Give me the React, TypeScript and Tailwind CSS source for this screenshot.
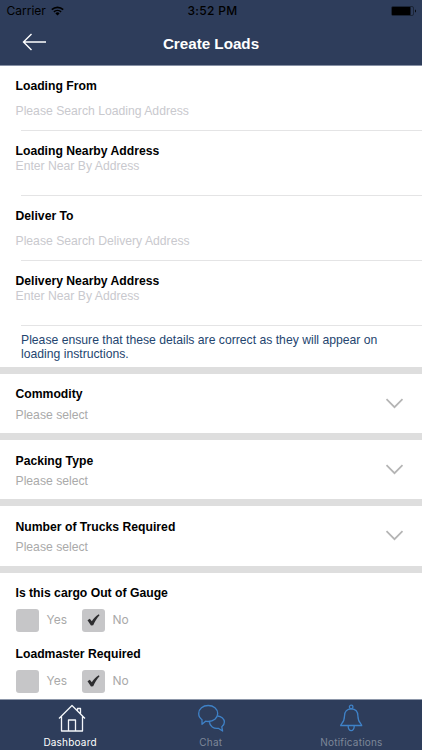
import React from "react";

const sans = "font-['Liberation_Sans',Arial,sans-serif]";
const system = "font-[Inter,Roboto,sans-serif]";

function StatusBar() {
  return (
    <div className={`grid h-[22px] grid-cols-3 items-center px-[7px] text-[12px] text-black ${system}`}>
      <div className="-ml-[0.5px] flex items-center gap-[5px]">
        <span className="text-[12px]">Carrier</span>
        <svg width="13" height="10" viewBox="0 0 13 10" fill="none" stroke="currentColor" strokeWidth="1.6">
          <path d="M0.8 3.7a8.2 8.2 0 0 1 11.4 0" />
          <path d="M2.9 5.9a5.2 5.2 0 0 1 7.2 0" />
          <path d="M4.4 7.4a3 3 0 0 1 4.2 0L6.5 9.5z" fill="currentColor" stroke="none" />
        </svg>
      </div>
      <span className="pl-[3px] text-center text-[12px] font-medium tracking-[0.3px]">3:52 PM</span>
      <svg className="-mr-[2px] justify-self-end" width="26" height="10" viewBox="0 0 26 10">
        <rect x="0.5" y="0.5" width="22" height="9" rx="1.5" fill="none" stroke="#17202f" strokeWidth="0.8" />
        <rect x="1" y="1" width="18.5" height="8" rx="0.5" fill="#000" />
        <path d="M24 3.5v3c1.2-.4 1.2-2.600 0-3z" fill="#000" />
      </svg>
    </div>
  );
}

function Field({ label, placeholder, spaced }: { label: string; placeholder: string; spaced?: boolean }) {
  return (
    <div className="h-[65.1px] pt-[13px]">
      <div className="flex h-full flex-col">
        <div className="pl-[15.500px] text-[12.2px] leading-[15px] font-bold">{label}</div>
        <div className={`pl-[15.500px] text-[12.2px] leading-[15px] text-[#c9c9ce] ${spaced ? "mt-[10px]" : ""}`}>
          {placeholder}
        </div>
        <div className="mt-auto ml-[21px] h-px bg-[#e4e4e5]" />
      </div>
    </div>
  );
}

function Select({ label }: { label: string }) {
  return (
    <div className="flex h-[66.200px] items-center justify-between border-t-[7px] border-[#dedede] pr-[18px] pl-[15.500px]">
      <div className="pt-[3px]">
        <div className="text-[12.2px] leading-[15px] font-bold">{label}</div>
        <div className="mt-[5.500px] text-[12.2px] leading-[15px] text-[#aaaaaa]">Please select</div>
      </div>
      <svg width="19" height="11" viewBox="0 0 19 11" fill="none" stroke="#b4b4b4" strokeWidth="1.7">
        <path d="M1.500 1.200 9.500 9.200 17.500 1.200" />
      </svg>
    </div>
  );
}

function Check({ checked }: { checked?: boolean }) {
  return (
    <span className="flex size-[23px] items-center justify-center rounded-[3px] bg-[#c6c6c8]">
      {checked && (
        <svg width="13" height="12" viewBox="0 0 13 12" fill="#2d2d2f">
          <path d="M0.500 6.300 2.800 4.800 4.800 7.200C6.600 4.500 8.600 2.200 11.800 0.300L12.500 1.200C9.800 4.200 7.900 7.400 6.200 11.200L4 11.400z" />
        </svg>
      )}
    </span>
  );
}

function Question({ label }: { label: string }) {
  return (
    <div className="h-[61px] pl-4">
      <div className="-ml-[0.5px] text-[12.2px] leading-[15px] font-bold">{label}</div>
      <div className={`mt-[8px] flex items-center text-[12px] text-[#a9a9a9] ${system}`}>
        <Check />
        <span className="w-[43px] pl-[7.500px]">Yes</span>
        <Check checked />
        <span className="pl-[7.500px]">No</span>
      </div>
    </div>
  );
}

function Tab({
  label,
  active,
  offset,
  children,
}: {
  label: string;
  active?: boolean;
  offset: string;
  children: React.ReactNode;
}) {
  return (
    <div className={`flex flex-1 flex-col items-center ${active ? "text-white" : "text-[#7d8799]"}`}>
      <svg
        width="30"
        height="30"
        viewBox="0 0 30 30"
        fill="none"
        stroke={active ? "#f4f6fa" : "#3f82c8"}
        strokeWidth="1.3"
        strokeLinejoin="round"
        className={`mt-[3px] ${offset}`}
      >
        {children}
      </svg>
      <span className="mt-[3px] -ml-[0.5px] text-[10px] leading-[13px] tracking-[0.2px]">{label}</span>
    </div>
  );
}

export default function App() {
  return (
    <div className={`flex h-[750px] w-[422px] flex-col overflow-hidden bg-white text-black ${sans}`}>
      <header className="h-[66px] shrink-0 border-b border-[#8791a5] bg-[#2e3d5b]">
        <StatusBar />
        <div className="grid h-[43px] grid-cols-[60px_1fr_60px] items-center">
          <svg className="ml-[21.500px] -mt-[3px]" width="25" height="18" viewBox="0 0 25 18" fill="none" stroke="#fff" strokeWidth="1.400">
            <path d="M9.500 1 1.500 9l8 8M1.500 9H24" />
          </svg>
          <h1 className="pt-[2px] text-center text-[15.200px] font-bold text-white">Create Loads</h1>
        </div>
      </header>
      <main className="min-h-0 flex-1 overflow-hidden">
        <Field label="Loading From" placeholder="Please Search Loading Address" spaced />
        <Field label="Loading Nearby Address" placeholder="Enter Near By Address" />
        <Field label="Deliver To" placeholder="Please Search Delivery Address" spaced />
        <Field label="Delivery Nearby Address" placeholder="Enter Near By Address" />
        <p className="h-[40.600px] pt-[7px] pl-[21px] text-[12.2px] leading-[14px] text-[#24456f]">
          Please ensure that these details are correct as they will appear on
          <br />
          loading instructions.
        </p>
        <Select label="Commodity" />
        <Select label="Packing Type" />
        <Select label="Number of Trucks Required" />
        <div className="border-t-[7px] border-[#dedede] pt-[13px]">
          <Question label="Is this cargo Out of Gauge" />
          <Question label="Loadmaster Required" />
        </div>
      </main>
      <nav className={`flex h-[51px] shrink-0 border-t border-[#8d97a9] bg-[#2e3d5b] ${system}`}>
        <Tab label="Dashboard" active offset="ml-[4px]">
          <path d="M2 15.500 15 2.500 28 15.500M4.500 13.500V28h21V13.500M20.500 8V5.500h3V11M11.500 28V17h7v11" />
        </Tab>
        <Tab label="Chat" offset="-ml-px">
          <path d="M12.200 2.500c5.300 0 9.500 3.500 9.500 8s-4.200 8-9.500 8c-.9 0-1.800-.1-2.600-.3L6 21.300v-4.600c-2-1.400-3.300-3.600-3.300-6.200 0-4.500 4.200-8 9.500-8z" />
          <path d="M21.500 13c4 .3 6.900 2.900 6.900 6.100 0 1.900-1 3.600-2.600 4.700l.8 4.200-4.300-2.700c-4.700.7-8.600-2.200-8.800-6.200" />
        </Tab>
        <Tab label="Notifications" offset="-ml-[2px]">
          <circle cx="15.200" cy="4" r="1.800" />
          <path d="M4.700 22.500c-.3-1.500 3.800-2.500 3.800-9.500 0-4.600 2.700-7.200 6.700-7.200s6.700 2.600 6.700 7.200c0 7 4.100 8 3.800 9.500z" />
          <path d="M12.200 22.700c-.4 6.600 6.400 6.600 6 0" />
        </Tab>
      </nav>
    </div>
  );
}
